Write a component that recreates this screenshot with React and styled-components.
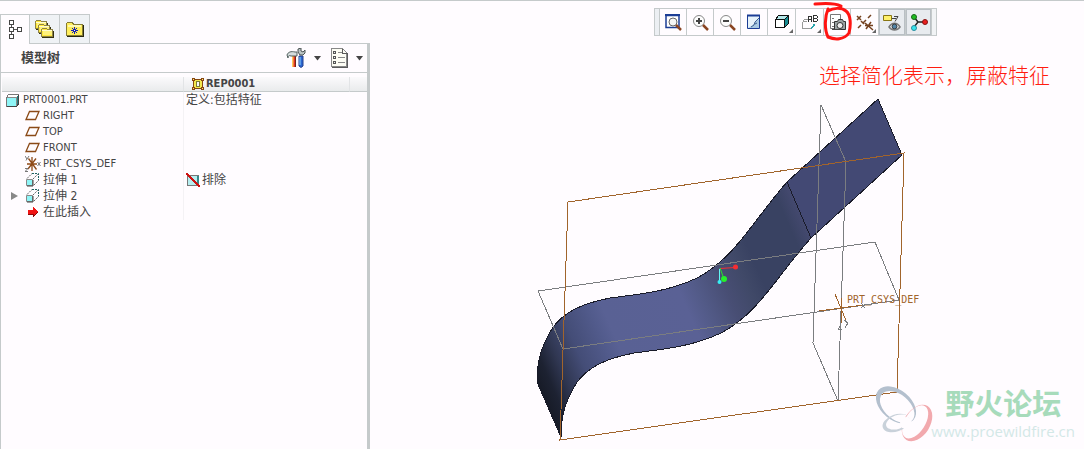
import React from "react";
import styled, { createGlobalStyle, css } from "styled-components";

const line = "#c5cacb";
const paper = "#fffcff";

const GlobalStyle = createGlobalStyle`
  * { box-sizing: border-box; }
  body {
    margin: 0;
    background: ${paper};
    color: #444;
    font: 11px/16px "DejaVu Sans Condensed", "Noto Sans CJK SC", sans-serif;
  }
  button { font: inherit; color: inherit; padding: 0; }
`;

const Frame = styled.div`
  display: flex;
  min-height: 100vh;
  border-top: 1px solid ${line};
`;

const Panel = styled.aside`
  flex: 0 0 370px;
  display: flex;
  flex-direction: column;
`;

const TabStrip = styled.div`
  display: flex;
  padding-top: 13px;
  border-bottom: 1px solid ${line};
`;

const Tab = styled.button`
  width: 30px;
  height: 29px;
  display: grid;
  place-items: center;
  border: 1px solid ${line};
  border-width: 1px 1px 0 0;
  background: #eff2f5;
  ${(p) =>
    p.$active &&
    css`
      height: 30px;
      margin-bottom: -1px;
      border-left-width: 1px;
      background: ${paper};
    `}
`;

const PanelBody = styled.div`
  flex: 1;
  border-left: 1px solid ${line};
  border-right: 3px solid ${line};
`;

const TitleBar = styled.div`
  height: 29px;
  display: flex;
  align-items: center;
  padding: 0 4px 0 20px;
  border-bottom: 1px solid ${line};
`;

const Title = styled.h1`
  flex: 1;
  margin: 0;
  font-size: 13px;
  font-weight: 700;
`;

const MenuButton = styled.button`
  display: flex;
  align-items: center;
  justify-content: flex-end;
  gap: 8px;
  width: 42px;
  height: 24px;
  border: 0;
  background: none;
`;

const TreeTable = styled.table`
  width: calc(100% - 1px);
  margin: 4px 0 0 1px;
  table-layout: fixed;
  border-collapse: separate;
  border-spacing: 0;
`;

const HeadCell = styled.th`
  height: 15px;
  padding: 0 0 0 8px;
  text-align: left;
  line-height: 14px;
  border-bottom: 1px solid ${line};
  border-right: ${(p) => (p.$last ? "0" : "1px solid #e2e4e6")};
  background: linear-gradient(#fbfafc, #e9ebec);
`;

const BodyCell = styled.td`
  height: 16px;
  padding: 0 0 0 ${(p) => p.$indent || 2}px;
  border-right: ${(p) => (p.$divided ? "1px solid #f4f2f5" : "0")};
`;

const Item = styled.span`
  display: flex;
  align-items: center;
  gap: ${(p) => p.$gap || 2}px;
  height: ${(p) => p.$height || 16}px;
  white-space: nowrap;
`;

const Han = styled.span`
  font-size: 12px;
`;

const Expander = styled.button`
  display: flex;
  width: 12px;
  height: 16px;
  align-items: center;
  border: 0;
  background: none;
`;

const Viewport = styled.main`
  flex: 1;
  position: relative;
  min-width: 0;
  overflow: hidden;
`;

const Scene = styled.svg`
  display: block;
`;

const Toolbar = styled.div`
  position: absolute;
  top: 7px;
  left: 284px;
  display: flex;
  height: 28px;
  padding-right: 4px;
  border: 1px solid ${line};
  background: #f1f3f5;
`;

const Grip = styled.span`
  width: 4px;
  background: #eceff3;
`;

const Tool = styled.button`
  position: relative;
  display: grid;
  place-items: center;
  width: ${(p) => (p.$menu ? 28 : 27)}px;
  height: 26px;
  border: 0;
  border-left: 1px solid ${line};
  background: ${(p) => (p.$pressed ? "#e8ebef" : paper)};
  box-shadow: ${(p) => (p.$pressed ? "inset 0 0 0 1px #b9bfc4" : "none")};
  &:last-child { border-right: 1px solid ${line}; }
`;

const Corner = styled.i`
  position: absolute;
  right: 2px;
  bottom: 2px;
  border: 2px solid transparent;
  border-right-color: #666;
  border-bottom-color: #666;
`;

const PenMark = styled.svg`
  position: absolute;
  left: -11px;
  top: -8px;
  z-index: 1;
  pointer-events: none;
`;

const Note = styled.p`
  position: absolute;
  top: 58px;
  left: 449px;
  margin: 0;
  color: #ff1c10;
  font: 300 21px/30px "Noto Sans CJK SC", sans-serif;
  white-space: nowrap;
`;

const Watermark = styled.div`
  position: absolute;
  right: 9px;
  bottom: 6px;
  display: flex;
`;

const Logo = styled.svg`
  overflow: visible;
`;

const WatermarkText = styled.div`
  display: flex;
  flex-direction: column;
  align-items: center;
  gap: 6px;
  white-space: nowrap;
`;

const ForumName = styled.div`
  color: #a7dbbb;
  font: 700 29px/30px "Noto Sans CJK SC", sans-serif;
`;

const ForumUrl = styled.div`
  color: #d3e8e7;
  font: 15px/16px "Open Sans", sans-serif;
`;

function Icon({ w = 16, h = 16, smooth, children }) {
  return (
    <svg
      width={w}
      height={h}
      viewBox={`0 0 ${w} ${h}`}
      fill="none"
      shapeRendering={smooth ? "auto" : "crispEdges"}
      aria-hidden="true"
    >
      {children}
    </svg>
  );
}

const Caret = () => (
  <Icon w={7} h={5} smooth>
    <path d="M0 0h7L3.500 4.500z" fill="#444" />
  </Icon>
);

const TreeIcon = () => (
  <Icon w={14} h={20}>
    <path d="M3.500 5v10M6 9.500h3" stroke="#555" />
    <path d="M1.500 .5h4v4h-4zM1.500 7.500h4v4h-4zM1.500 14.500h4v4h-4zM9.500 7.500h4v4h-4z" fill="#fff" stroke="#444" />
  </Icon>
);

const LayersIcon = () => (
  <Icon w={19} h={20}>
    {[[0, 0], [3, 4], [6, 8]].map(([x, y]) => (
      <g key={x} transform={`translate(${x} ${y})`}>
        <path d="M.5 9.500v-7l1-1h4l1 1h5v7z" fill="#ffe83a" stroke="#8f8446" />
        <path d="M2 4h9v4H2z" fill="#fff27c" />
        <path d="M1 3.500h10" stroke="#fffbd0" />
        <path d="M1 10.500h11.500V4" stroke="#35310f" />
      </g>
    ))}
  </Icon>
);

const FavoritesIcon = () => (
  <Icon w={18} h={16}>
    <path d="M.5 14.500v-12l1-1h5l1 2h9v11z" fill="#ffee5c" stroke="#857c34" />
    <path d="M2 4h13v2H2z" fill="#fffab0" />
    <path d="M1 15.500h16.500V4" stroke="#29270f" />
    <path d="M8.500 6v7M5 9.500h7M6 7l5 5M11 7l-5 5" stroke="#1420b0" />
    <path d="M8 9h1v1H8z" fill="#fff" />
  </Icon>
);

const ToolsIcon = () => (
  <Icon w={20} h={20} smooth>
    <path d="M6 8h4v11H6z" fill="#e33522" />
    <path d="M6 8h1.500v11H6z" fill="#ffc85a" />
    <path d="M9.500 8v11" stroke="#71251b" />
    <path d="M1 7c1-3 4-4 8-3h2v4H5c-2-1-3 0-3 2z" fill="#d5dddd" stroke="#52605f" />
    <path d="M13 8h4v10l-2 1.500-2-1.500z" fill="#2c66d2" stroke="#24418b" />
    <path d="M14 9v8" stroke="#8fd6f8" />
    <path d="M12 1v3l2 3h3l2-2V2l-2 2-2-1V0z" fill="#bac4c4" stroke="#4b5353" />
  </Icon>
);

const SettingsListIcon = () => (
  <Icon w={17} h={20}>
    <path d="M.5 .5h11l4 4v14H.5z" fill="#fdfdf4" stroke="#888" />
    <path d="M11.500 1v4h4M16.500 5v14.500H1" stroke="#5b5b5b" />
    <path d="M7 4.500h4M7 9.500h7M7 14.500h7" stroke="#888" />
    <path d="M2.500 3.500h2v2h-2zM2.500 8.500h2v2h-2zM2.500 13.500h2v2h-2z" stroke="#555" fill="#eee" />
  </Icon>
);

const RepIcon = () => (
  <Icon w={12} h={14}>
    <path d="M1.500 2.500h9v9h-9z" fill="#f3e84b" stroke="#87460f" />
    <path d="M0 1h3v3H0zM9 1h3v3H9zM0 10h3v3H0zM9 10h3v3H9z" fill="#87460f" />
    <path d="M1 2h1v1H1zM10 2h1v1h-1zM1 11h1v1H1zM10 11h1v1h-1z" fill="#ffe980" />
    <path d="M4.500 4.500h3v5h-3z" fill="#f8f8f8" stroke="#7c7a34" />
  </Icon>
);

const PartIcon = () => (
  <Icon w={13} h={13}>
    <path d="M.5 3.500l2-3h10v9l-2 3H.5z" fill="#fff" stroke="#777" />
    <path d="M1 3h9v9H1z" fill="#8ff5f7" />
    <path d="M10 3l2-2v8l-2 3z" fill="#267f80" />
    <path d="M.5 3.500h10v9" stroke="#888" />
    <path d="M12.500 1v9l-2 2.500H1" stroke="#444" />
  </Icon>
);

const PlaneIcon = () => (
  <Icon w={16} h={12} smooth>
    <path d="M4.500 1.500h9.500l-3.500 8H1z" stroke="#8b4a17" strokeWidth="1.300" />
  </Icon>
);

const CsysIcon = () => (
  <Icon w={16} h={16} smooth>
    <path d="M7 1v14M2 8h10M3.500 2.500l8 11M11 2.500L3 13" stroke="#8e4a17" strokeWidth="1.300" />
    <path d="M0 0l2 3M4 0L1 4.500M12.500 6l3 4M15.500 6l-3 4M0 12.500h3l-3 3h3" stroke="#777" />
  </Icon>
);

const ExtrudeIcon = () => (
  <Icon w={16} h={14} smooth>
    <path d="M1.500 6.500h6v6h-6z" fill="#8ff5f7" stroke="#888" />
    <path d="M8 7v6H2" stroke="#444" />
    <path d="M2 5.500l5-5M8 6l5-5M9 12l5-5" stroke="#666" strokeDasharray="2 1" />
    <path d="M7 .5h6.500V7" stroke="#1e6262" strokeDasharray="2 1" />
  </Icon>
);

const InsertIcon = () => (
  <Icon w={12} h={12}>
    <path d="M1 4h5V1l5 5-5 5V8H1z" fill="#f01414" />
    <path d="M1 8h5v3l5-5" stroke="#8f0808" />
  </Icon>
);

const ExcludedIcon = () => (
  <Icon w={15} h={15}>
    <path d="M1.500 3.500l1-1h10v9l-2 1h-9z" fill="#b6eef0" stroke="#777" />
    <path d="M11 3h2v8l-2 1z" fill="#35898a" />
    <path d="M0 0l14 14" stroke="#cd1212" strokeWidth="2" />
  </Icon>
);

const Lens = ({ minus }) => (
  <>
    <circle cx="7" cy="7" r="5.500" fill="#fdfdfd" stroke="#888" />
    <path d={minus ? "M4 7h6" : "M4 7h6M7 4v6"} stroke="#444" strokeWidth="2" />
    <path d="M11 11l5 5" stroke="#8a4522" strokeWidth="2.500" />
  </>
);

const RefitIcon = () => (
  <Icon w={17} h={17} smooth>
    <path d="M1 1.500h13v12H1z" fill="#fff" stroke="#1b3d95" strokeWidth="1.500" />
    <path d="M0 1h15" stroke="#1b3d95" strokeWidth="2" />
    <circle cx="8" cy="8" r="4" fill="#f6f6f6" stroke="#666" />
    <path d="M11 11l5 5" stroke="#8a4522" strokeWidth="2.500" />
  </Icon>
);

const ZoomInIcon = () => <Icon w={17} h={17} smooth><Lens /></Icon>;
const ZoomOutIcon = () => <Icon w={17} h={17} smooth><Lens minus /></Icon>;

const RepaintIcon = () => (
  <Icon w={16} h={16} smooth>
    <path d="M1.500 1.500h12v13h-12z" fill="#e6f2fa" stroke="#1b3d95" />
    <path d="M1 1.500h13" stroke="#1b3d95" strokeWidth="2" />
    <path d="M2 14l5-3 3-4 3-2v9z" fill="#a9cae3" />
    <path d="M5 13l3-2 1-3 4-4M9 10l2-1" stroke="#3d5f90" />
  </Icon>
);

const ShadingIcon = () => (
  <Icon w={16} h={16}>
    <path d="M1 5l4-3h10v8l-4 4H1z" fill="#fff" />
    <path d="M11 5l3-3v8l-3 3z" fill="#168b91" />
    <path d="M4 2h10l-3 3H2z" fill="#b5e8ea" />
    <path d="M1.500 5.500h9v8h-9zM1.500 5.500l3-4h10v8l-4 4M10.500 5.500l4-4" stroke="#111" />
  </Icon>
);

const ViewsIcon = () => (
  <Icon w={18} h={16}>
    <path d="M1.500 7.500l2-2h3M1.500 7.500v7h8l3-3M1.500 7.500h4" stroke="#999" />
    <path d="M10 14.500l3-3v-2" stroke="#28a4ac" strokeWidth="2" />
    <path d="M7.500 8V3l1-1h1l1 1v5M7 5.500h4M12.500 1.500h3l1 1v1l-1 1h-3zM12.500 4.500h3l1 1v1l-1 1h-3z" stroke="#333" />
  </Icon>
);

const ViewManagerIcon = () => (
  <Icon w={17} h={17} smooth>
    <path d="M1.500 .5h10v14h-10z" fill="#fff" stroke="#777" />
    <path d="M3 4.500h2M3 8.500h2M3 12.500h2" stroke="#777" />
    <path d="M5.500 7.500h3l1-2h4l1 2h2v8h-11z" fill="#9ba4a4" stroke="#333" />
    <circle cx="11" cy="11.500" r="3" fill="#eee" stroke="#333" />
    <path d="M3 15.500h9" stroke="#444" />
  </Icon>
);

const DatumIcon = () => (
  <Icon w={18} h={17} smooth>
    <path d="M1 2l4 4M5 2L1 6M2 14l3-3M7 9l3-3M12 4l3-3" stroke="#74411f" strokeWidth="1.500" />
    <path d="M5 7l3 3M9 9l8 7M10 15l5-7M9 11.500h8" stroke="#74411f" strokeWidth="1.500" />
  </Icon>
);

const AnnotationIcon = () => (
  <Icon w={18} h={17} smooth>
    <path d="M.5 1.500h8v5h-8z" fill="#fff16b" stroke="#887613" />
    <path d="M9 4.500h4M11 2.500h4l-3 5" stroke="#444" />
    <path d="M6 13c3-5 8-5 11 0-3 4-8 4-11 0z" fill="#fff" stroke="#777" strokeWidth="1.500" />
    <circle cx="11.500" cy="12.500" r="2.500" fill="#5184a6" stroke="#333" />
  </Icon>
);

const SpinIcon = () => (
  <Icon w={18} h={18} smooth>
    <path d="M4 4l4 5-4 5M8 9h6" stroke="#222" strokeWidth="1.500" />
    <circle cx="4" cy="4" r="2.500" fill="#20bd22" stroke="#176619" />
    <circle cx="4" cy="15" r="2.500" fill="#35e4ed" stroke="#298c9e" />
    <circle cx="15" cy="9" r="2.500" fill="#e91e1e" stroke="#841313" />
  </Icon>
);

const tools = [
  { label: "Refit", icon: <RefitIcon /> },
  { label: "Zoom in", icon: <ZoomInIcon /> },
  { label: "Zoom out", icon: <ZoomOutIcon /> },
  { label: "Repaint", icon: <RepaintIcon /> },
  { label: "Display style", icon: <ShadingIcon />, menu: true },
  { label: "Saved views", icon: <ViewsIcon />, menu: true },
  { label: "View manager", icon: <ViewManagerIcon />, marked: true },
  { label: "Datum display", icon: <DatumIcon />, menu: true },
  { label: "Annotation display", icon: <AnnotationIcon />, pressed: true },
  { label: "Spin center", icon: <SpinIcon />, pressed: true },
];

const rows = [
  { name: "RIGHT", icon: <PlaneIcon /> },
  { name: "TOP", icon: <PlaneIcon /> },
  { name: "FRONT", icon: <PlaneIcon /> },
  { name: "PRT_CSYS_DEF", icon: <CsysIcon /> },
  { name: "拉伸 1", icon: <ExtrudeIcon />, han: true, status: "排除" },
  { name: "拉伸 2", icon: <ExtrudeIcon />, han: true, expandable: true },
  { name: "在此插入", icon: <InsertIcon />, han: true },
];

const IconSlot = styled.span`
  width: 16px;
  height: 16px;
  display: grid;
  place-items: center;
`;

function ModelTree() {
  return (
    <TreeTable>
      <colgroup>
        <col style={{ width: 182 }} />
        <col />
        <col style={{ width: 17 }} />
      </colgroup>
      <thead>
        <tr>
          <HeadCell aria-label="Feature" />
          <HeadCell>
            <Item $height={14}><RepIcon />REP0001</Item>
          </HeadCell>
          <HeadCell $last aria-label="More" />
        </tr>
      </thead>
      <tbody>
        <tr>
          <BodyCell $divided $indent={4}>
            <Item $gap={4}><PartIcon />PRT0001.PRT</Item>
          </BodyCell>
          <BodyCell colSpan={2}><Item><Han>定义:包括特征</Han></Item></BodyCell>
        </tr>
        {rows.map((row) => (
          <tr key={row.name}>
            <BodyCell $divided $indent={row.expandable ? 9 : 23}>
              <Item>
                {row.expandable && (
                  <Expander aria-label="Expand">
                    <Icon w={7} h={8} smooth><path d="M0 0l7 4-7 4z" fill="#888" /></Icon>
                  </Expander>
                )}
                <Item>
                  <IconSlot>{row.icon}</IconSlot>
                  {row.han ? <Han>{row.name}</Han> : row.name}
                </Item>
              </Item>
            </BodyCell>
            <BodyCell colSpan={2}>
              {row.status && <Item $gap={1}><ExcludedIcon /><Han>{row.status}</Han></Item>}
            </BodyCell>
          </tr>
        ))}
      </tbody>
    </TreeTable>
  );
}

const topEdge =
  "M537 382C537 360 541 347 553 327C565 312 580 304 610 298C640 294 667 292 697 278C735 258 752 222 787 182";
const bottomEdge =
  "M561 437C561 415 565 402 577 382C589 367 604 359 634 353C664 349 691 347 721 333C759 313 776 277 811 238";

function Model() {
  return (
    <Scene width="714" height="448" viewBox="370 1 714 448" fill="none" role="img" aria-label="Swept surface">
      <defs>
        <linearGradient id="shade" gradientUnits="userSpaceOnUse" x1="537" y1="382" x2="820" y2="258">
          <stop offset="0" stopColor="#171b27" />
          <stop offset=".04" stopColor="#1d2232" />
          <stop offset=".09" stopColor="#303752" />
          <stop offset=".16" stopColor="#444d77" />
          <stop offset=".25" stopColor="#525b8c" />
          <stop offset=".29" stopColor="#596194" />
          <stop offset=".54" stopColor="#5a6195" />
          <stop offset=".6" stopColor="#525a87" />
          <stop offset=".68" stopColor="#484e74" />
          <stop offset=".75" stopColor="#404968" />
          <stop offset=".8" stopColor="#394262" />
          <stop offset=".95" stopColor="#394262" />
          <stop offset="1" stopColor="#44496f" />
        </linearGradient>
      </defs>
      <path
        d={`${topEdge}L811 238C776 277 759 313 721 333C691 347 664 349 634 353C604 359 589 367 577 382C565 402 561 415 561 437Z`}
        fill="url(#shade)"
      />
      <path d="M787 182L878 99L902 155L811 238Z" fill="#434974" />
      <g shapeRendering="crispEdges">
        <path d={topEdge} stroke="#191b29" />
        <path d={bottomEdge} stroke="#191b29" />
        <path d="M537 382L561 437M787 182L878 99L902 155L811 238Z" stroke="#191b29" />
        <path d="M538 291L875 242L899 300L563 349Z" stroke="#7b7d80" />
        <path d="M821 105L846 162L838 401L813 343Z" stroke="#7b7d80" />
        <path d="M568 202L904 153L897 392L560 440Z" stroke="#a1642c" />
        <path d="M819 311L863 305M835 294L847 323M841 298V323" stroke="#a1642c" />
        <path d="M861 303l4 5M865 304l-4 4M844 320l4 3-3 5M838 330l2-4 1 3h-3" stroke="#7b7d80" />
      </g>
      <text x="847" y="303" fill="#a1642c" fontFamily="DejaVu Sans Mono, monospace" fontSize="10">PRT_CSYS_DEF</text>
      <path d="M720 268.500L735 267.500" stroke="#f52e32" />
      <path d="M720 268L724 279" stroke="#25e62b" />
      <path d="M719.500 269V282" stroke="#62f5f5" />
      <circle cx="735.500" cy="267" r="2.500" fill="#f52e32" />
      <circle cx="724" cy="279" r="3" fill="#25f02b" />
      <circle cx="719.500" cy="282" r="2" fill="#35f0f5" />
    </Scene>
  );
}

// Outline of an ellipse as a subpath, so two of them can form a crescent ring.
const oval = (cx, cy, rx, ry) =>
  `M${cx - rx} ${cy}a${rx} ${ry} 0 1 0 ${2 * rx} 0a${rx} ${ry} 0 1 0 ${-2 * rx} 0Z`;

function ForumLogo() {
  return (
    <Logo width="56" height="56" viewBox="0 0 56 56" fillRule="evenodd" aria-hidden="true">
      <path d={oval(0, 0, 23, 15) + oval(2.2, 0.8, 20, 12.4)} transform="translate(21 18) rotate(40)" fill="#b4c0ce" />
      <path d={oval(0, 0, 20, 13) + oval(0, -2.2, 18.5, 10.2)} transform="translate(42 36) rotate(-58)" fill="#f2a9ae" />
      <path d={oval(0, 0, 14, 8.5) + oval(1.8, -0.4, 12, 6.8)} transform="translate(21 36) rotate(-20)" fill="#c9d1da" />
      <ellipse cx="31" cy="36" rx="6" ry="6" fill={paper} />
    </Logo>
  );
}

export default function App() {
  return (
    <>
      <GlobalStyle />
      <Frame>
        <Panel>
          <TabStrip role="tablist">
            <Tab $active role="tab" aria-selected="true" aria-label="Model tree"><TreeIcon /></Tab>
            <Tab role="tab" aria-selected="false" aria-label="Folders"><LayersIcon /></Tab>
            <Tab role="tab" aria-selected="false" aria-label="Favorites"><FavoritesIcon /></Tab>
          </TabStrip>
          <PanelBody>
            <TitleBar>
              <Title>模型树</Title>
              <MenuButton aria-label="Tools"><ToolsIcon /><Caret /></MenuButton>
              <MenuButton aria-label="Show"><SettingsListIcon /><Caret /></MenuButton>
            </TitleBar>
            <ModelTree />
          </PanelBody>
        </Panel>
        <Viewport>
          <Model />
          <Toolbar role="toolbar" aria-label="View">
            <Grip />
            {tools.map((tool) => (
              <Tool key={tool.label} aria-label={tool.label} $menu={tool.menu} $pressed={tool.pressed}>
                {tool.icon}
                {tool.menu && <Corner />}
                {tool.marked && (
                  <PenMark width="42" height="42" viewBox="0 0 42 42" fill="none">
                    <path
                      d="M2 3C12 2 22 2 28 5M15 8C12 15 11 28 15 36C22 39 31 39 36 32C38 24 38 14 33 10C28 6 20 7 15 10"
                      stroke="#ff1412"
                      strokeWidth="3"
                      strokeLinecap="round"
                    />
                  </PenMark>
                )}
              </Tool>
            ))}
          </Toolbar>
          <Note>选择简化表示，屏蔽特征</Note>
          <Watermark>
            <ForumLogo />
            <WatermarkText>
              <ForumName>野火论坛</ForumName>
              <ForumUrl>www.proewildfire.cn</ForumUrl>
            </WatermarkText>
          </Watermark>
        </Viewport>
      </Frame>
    </>
  );
}
